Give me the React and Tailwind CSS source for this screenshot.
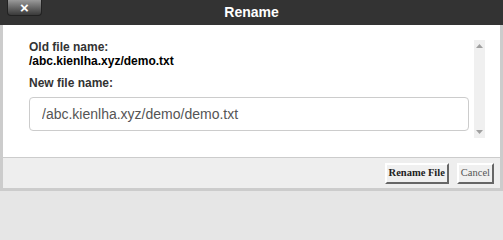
import React from "react";

const RenameDialog = () => {
  return (
    <div className="w-[503px] h-[203px] bg-[#e6e6e6] font-['Liberation_Sans',Arial,sans-serif]">
      <div className="relative h-[25px] bg-[#333333] flex items-center justify-center">
        <button className="absolute left-[7px] top-0 w-[35px] h-[16px] rounded-b-[4px] border border-t-0 border-[#222] bg-gradient-to-b from-[#9a9a9a] to-[#3a3a3a] flex items-center justify-center text-white text-[15px] font-bold leading-none">
          ×
        </button>
        <span className="text-white text-[14px] font-bold">Rename</span>
      </div>

      <div className="border-x-[3px] border-b-[3px] border-[#cccccc]">
        <div className="h-[132px] bg-white flex pt-[15px]">
          <div className="flex-1 pl-[26px] pr-[5px]">
            <div className="text-[12px] font-bold text-[#333] leading-[14px]">Old file name:</div>
            <div className="text-[12px] font-bold text-black leading-[14px]">/abc.kienlha.xyz/demo.txt</div>
            <div className="text-[12px] font-bold text-[#333] leading-[14px] mt-[8px]">New file name:</div>
            <input
              readOnly
              value="/abc.kienlha.xyz/demo/demo.txt"
              className="mt-[7px] w-full h-[34px] rounded-[4px] border border-[#cccccc] px-[12px] text-[14px] text-[#555] outline-none font-['Liberation_Sans',Arial,sans-serif]"
            />
          </div>
          <div className="w-[11px] h-[98px] bg-[#f0f0f0] mr-[15px] flex flex-col items-center justify-between py-[4px]">
            <svg width="7" height="4" viewBox="0 0 7 4"><path d="M3.5 0L7 4H0z" fill="#a0a0a0" /></svg>
            <svg width="7" height="4" viewBox="0 0 7 4"><path d="M0 0h7L3.5 4z" fill="#a0a0a0" /></svg>
          </div>
        </div>
        <div className="h-[31px] bg-[#eeeeee] border-t border-[#cccccc] flex items-center justify-end gap-[8px] pr-[6px]">
          <button className="h-[21px] px-[2px] bg-[#f0f0f0] border-2 border-t-[#ffffff] border-l-[#ffffff] border-b-[#666] border-r-[#666] text-[10.5px] font-bold text-[#222] leading-none font-['Liberation_Serif','Times_New_Roman',serif]">
            Rename File
          </button>
          <button className="h-[21px] px-[2px] bg-[#f0f0f0] border-2 border-t-[#ffffff] border-l-[#ffffff] border-b-[#666] border-r-[#666] text-[10.5px] text-[#555] leading-none font-['Liberation_Serif','Times_New_Roman',serif]">
            Cancel
          </button>
        </div>
      </div>
    </div>
  );
};

export default function App() {
  return (
    <div className="min-h-screen bg-[#e6e6e6]">
      <RenameDialog />
    </div>
  );
}
